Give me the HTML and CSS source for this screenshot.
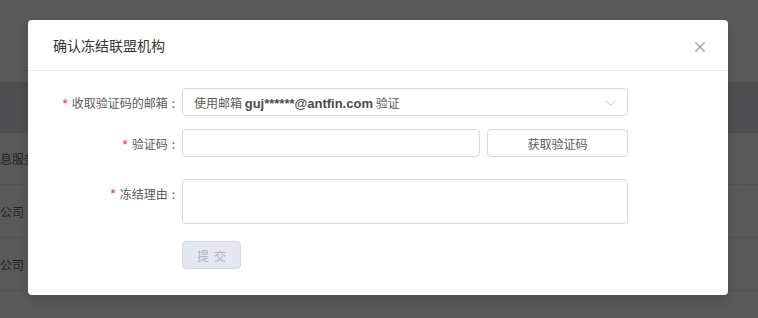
FILE: index.html
```html
<!DOCTYPE html>
<html lang="zh-CN">
<head>
<meta charset="utf-8">
<title>确认冻结联盟机构</title>
<link rel="stylesheet" href="styles.css">
</head>
<body>
<div class="page">
  <div class="page-top"></div>
  <div class="table">
    <div class="thead"></div>
    <div class="trow"><span class="cell long">息服务有限公司</span></div>
    <div class="trow"><span class="cell">公司</span></div>
    <div class="trow"><span class="cell">公司</span></div>
  </div>
</div>
<div class="mask"></div>
<div class="modal">
  <div class="modal-header">
    <div class="modal-title">确认冻结联盟机构</div>
    <button class="modal-close" aria-label="关闭">
      <svg width="10" height="10" viewBox="0 0 10 10"><path d="M0.5 0.5 L9.5 9.5 M9.5 0.5 L0.5 9.5" stroke="#999" stroke-width="1.1" fill="none"/></svg>
    </button>
  </div>
  <div class="modal-body">
    <div class="form">
      <div class="form-row r1">
        <div class="label"><span class="req">*</span>收取验证码的邮箱<span class="colon">:</span></div>
        <div class="control">
          <div class="select">
            <span class="select-value">使用邮箱 <b class="mail">guj******@antfin.com</b> 验证</span>
            <svg class="arrow" width="11" height="6" viewBox="0 0 11 6"><path d="M0.5 0.5 L5.5 5.5 L10.5 0.5" stroke="#c8c8c8" stroke-width="1" fill="none"/></svg>
          </div>
        </div>
      </div>
      <div class="form-row r2">
        <div class="label"><span class="req">*</span>验证码<span class="colon">:</span></div>
        <div class="control split">
          <div class="input"></div>
          <button class="btn">获取验证码</button>
        </div>
      </div>
      <div class="form-row r3">
        <div class="label top"><span class="req">*</span>冻结理由<span class="colon">:</span></div>
        <div class="control">
          <div class="textarea"></div>
        </div>
      </div>
      <div class="form-row r4">
        <div class="label"></div>
        <div class="control">
          <button class="btn-submit" disabled>提交</button>
        </div>
      </div>
    </div>
  </div>
</div>
</body>
</html>
```
FILE: styles.css
```css
* { box-sizing: border-box; }
html, body { margin: 0; padding: 0; }
body {
  width: 758px;
  height: 318px;
  overflow: hidden;
  font-family: "Liberation Sans", "Noto Sans CJK SC", sans-serif;
  font-size: 12px;
  background: #fff;
  position: relative;
}
.page-top { height: 82px; background: #fff; }
.thead { height: 51px; background: #e2e3e9; }
.trow {
  height: 53px;
  border-bottom: 1px solid #e8e8e8;
  display: flex;
  align-items: center;
  color: rgba(0,0,0,0.65);
  font-size: 12px;
}
.trow:nth-child(2) { height: 52px; }
.cell { white-space: nowrap; }
.mask {
  position: absolute;
  inset: 0;
  background: rgba(0,0,0,0.65);
}
.modal {
  position: absolute;
  left: 28px;
  top: 20px;
  width: 700px;
  height: 275px;
  background: #fff;
  border-radius: 4px;
  box-shadow: 0 4px 12px rgba(0,0,0,0.15);
}
.modal-header {
  height: 51px;
  border-bottom: 1px solid #e8e8e8;
  display: flex;
  align-items: center;
  justify-content: space-between;
  padding: 0 23px 0 25px;
}
.modal-title {
  font-family: "Noto Sans CJK SC", sans-serif;
  font-size: 14px;
  color: #333;
  font-weight: 400;
  margin-top: -1px;
}
.modal-close {
  border: 0;
  background: none;
  padding: 0;
  width: 10px;
  height: 10px;
  display: flex;
  margin-top: 3px;
}
.modal-body { padding: 17px 0 26px; }
.form { display: flex; flex-direction: column; }
.form-row { display: flex; }
.r2 { margin-top: 13px; }
.r3 { margin-top: 22px; }
.r4 { margin-top: 17px; }
.label {
  width: 154px;
  display: flex;
  align-items: center;
  justify-content: flex-end;
  padding-right: 7px;
  color: #595959;
  font-family: "Noto Sans CJK SC", sans-serif;
  font-size: 12px;
  white-space: nowrap;
}
.label.top { align-items: flex-start; padding-top: 6px; }
.req {
  color: #f5222d;
  margin-right: 4px;
  font-family: "Liberation Sans", sans-serif;
  font-size: 13px;
  position: relative;
  top: 1px;
}
.colon { margin-left: 4px; }
.control { width: 446px; }
.split { display: flex; gap: 7px; }
.select, .input, .textarea {
  border: 1px solid #d9d9d9;
  border-radius: 4px;
  background: #fff;
}
.select {
  height: 28px;
  display: flex;
  align-items: center;
  justify-content: space-between;
  padding: 0 11px 0 11px;
  color: #595959;
  font-family: "Noto Sans CJK SC", sans-serif;
}
.mail {
  font-family: "Liberation Sans", sans-serif;
  font-weight: bold;
  color: #4a4a4a;
  font-size: 13px;
}
.arrow { margin-top: 1px; }
.input { width: 298px; height: 28px; }
.btn {
  width: 141px;
  height: 28px;
  border: 1px solid #d9d9d9;
  border-radius: 4px;
  background: #fff;
  color: #595959;
  font-family: "Noto Sans CJK SC", sans-serif;
  font-size: 12px;
  padding: 0;
}
.textarea { height: 45px; }
.btn-submit {
  width: 59px;
  height: 28px;
  border: 1px solid #d3d8e3;
  border-radius: 4px;
  background: #e3e8f3;
  color: #b0b5c0;
  font-family: "Noto Sans CJK SC", sans-serif;
  font-size: 12px;
  letter-spacing: 5px;
  text-indent: 5px;
  padding: 0;
}
```
